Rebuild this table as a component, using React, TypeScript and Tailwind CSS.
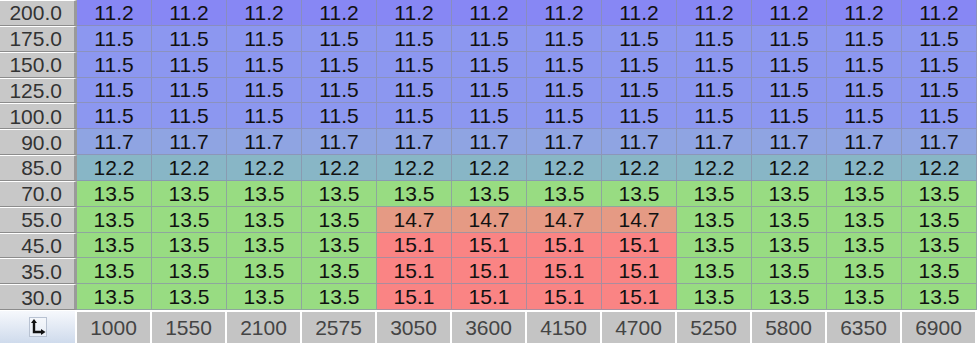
const rpm = [1000, 1550, 2100, 2575, 3050, 3600, 4150, 4700, 5250, 5800, 6350, 6900];

const loads = ["200.0", "175.0", "150.0", "125.0", "100.0", "90.0", "85.0", "70.0", "55.0", "45.0", "35.0", "30.0"];

// AFR per row; cols 4-7 get the lean island on the low-load rows
const rowBase = ["11.2", "11.5", "11.5", "11.5", "11.5", "11.7", "12.2", "13.5", "13.5", "13.5", "13.5", "13.5"];

function cellValue(row: number, col: number) {
  if (col >= 4 && col <= 7) {
    if (row === 8) return "14.7";
    if (row >= 9) return "15.1";
  }
  return rowBase[row];
}

const colorFor: Record<string, string> = {
  "11.2": "bg-[#8787f4]",
  "11.5": "bg-[#8c97f0]",
  "11.7": "bg-[#8fa4e2]",
  "12.2": "bg-[#88b6c6]",
  "13.5": "bg-[#98dc82]",
  "14.7": "bg-[#e59a84]",
  "15.1": "bg-[#fa8484]",
};

function CornerIcon() {
  return (
    <div className="flex h-[20px] w-[18px] items-center justify-center border border-[#b8c2d2] bg-white/40">
      <svg width="16" height="18" viewBox="0 0 16 18" fill="none">
        <path d="M4 4 V14 H12" stroke="#111" strokeWidth="2.4" />
        <path d="M1 5 L4 1 L7 5 Z" fill="#111" />
        <path d="M11 11 L15.5 14 L11 17 Z" fill="#111" />
      </svg>
    </div>
  );
}

export default function App() {
  return (
    <div
      className="grid h-[343px] w-[977px] grid-cols-[77px_repeat(12,75px)] grid-rows-[repeat(12,minmax(0,1fr))_33px] bg-white"
      style={{ fontFamily: '"Liberation Sans", Arial, sans-serif' }}
    >
      {loads.map((load, r) => (
        <div key={load} className="contents">
          <div className="flex items-center justify-end border-t border-b border-r-[3px] border-t-white border-b-[#8c8c8c] border-r-[#9a9a9a] bg-[#c8c8c8] pr-[12px] text-[21px] leading-none text-[#333]">
            {load}
          </div>
          {rpm.map((_, c) => {
            const v = cellValue(r, c);
            return (
              <div
                key={c}
                className={`flex items-center justify-center border-r border-b border-[#8a90a8]/70 text-[21px] leading-none text-[#111] ${colorFor[v]}`}
              >
                {v}
              </div>
            );
          })}
        </div>
      ))}
      <div className="flex items-center justify-center border-t border-r-2 border-t-white border-r-white bg-gradient-to-b from-[#f6f8fc] to-[#cfdbec]">
        <CornerIcon />
      </div>
      {rpm.map((v) => (
        <div
          key={v}
          className="flex items-center justify-center border-t-2 border-r-2 border-white bg-[#c4c4c4] text-[21px] leading-none text-[#444]"
        >
          {v}
        </div>
      ))}
    </div>
  );
}
